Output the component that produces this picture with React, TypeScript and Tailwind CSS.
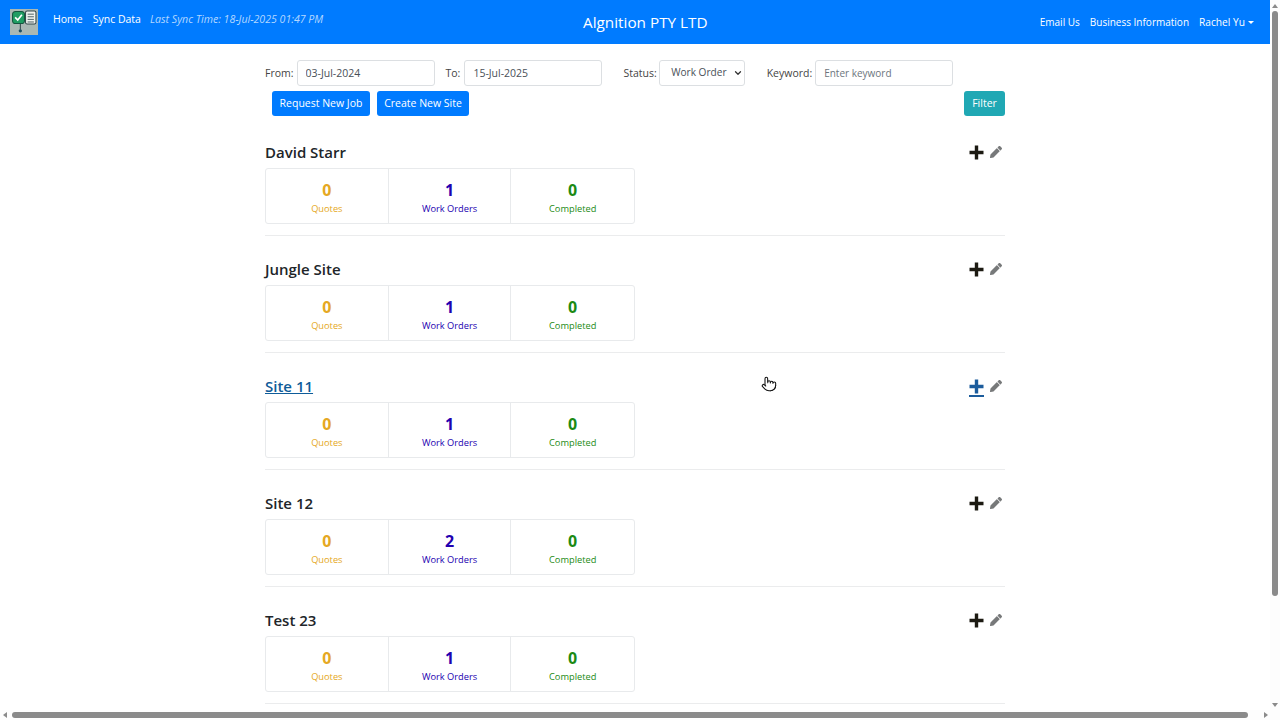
import { ChevronDown, Pointer } from "lucide-react"

const sites = [
  { name: "David Starr", orders: 1 },
  { name: "Jungle Site", orders: 1 },
  { name: "Site 11", orders: 1, hover: true },
  { name: "Site 12", orders: 2 },
  { name: "Test 23", orders: 1 },
]

function Logo() {
  return (
    <div className="flex h-[26px] w-[28px] items-start justify-center bg-[#a9b8b4] pt-[1px]">
      <svg width="25" height="25" viewBox="0 0 24 24">
        <path d="M8 13v6" stroke="#33474a" strokeWidth="1" />
        <circle cx="8" cy="20" r="1.6" fill="#1d4f63" />
        <rect x="0.5" y="1.5" width="11.5" height="11.5" rx="3" fill="#1f9d62" stroke="#14573f" />
        <path d="M3 7l2.5 2.5 4-5" fill="none" stroke="#fff" strokeWidth="1.6" />
        <rect x="13" y="1" width="10" height="12.5" rx="1.5" fill="#eef2ee" stroke="#33474a" />
        <path d="M15 4h6M15 6.5h6M15 9h6M15 11.5h6" stroke="#33474a" strokeWidth="0.8" />
      </svg>
    </div>
  )
}

function Pencil() {
  return (
    <svg width="12" height="12" viewBox="0 0 512 512" fill="#77797a">
      <path d="M497.9 142.1l-46.1 46.1c-4.7 4.7-12.3 4.7-17 0l-111-111c-4.7-4.7-4.7-12.3 0-17l46.1-46.1c18.7-18.7 49.1-18.7 67.9 0l60.1 60.1c18.8 18.7 18.8 49.1 0 67.9zM284.2 99.8L21.6 362.4.4 483.9c-2.9 16.4 11.4 30.6 27.8 27.8l121.5-21.3 262.6-262.6c4.7-4.7 4.7-12.3 0-17l-111-111c-4.8-4.7-12.4-4.7-17.1 0z" />
    </svg>
  )
}

function Plus({ color }: { color: string }) {
  return (
    <svg width="15" height="15" viewBox="0 0 15 15" fill={color}>
      <path d="M5.8 0.5h3.4v5.3h5.3v3.4H9.2v5.3H5.8V9.2H0.5V5.8h5.3z" />
    </svg>
  )
}

function Stat({ value, label, color, border }: { value: number; label: string; color: string; border?: boolean }) {
  return (
    <div className={`flex w-[123px] flex-col items-center pt-[10px] ${border ? "border-r border-[#e8eaec]" : ""}`}>
      <span className={`text-[16px] leading-[22px] font-bold ${color}`}>{value}</span>
      <span className={`mt-[1px] text-[9.25px] leading-[14px] ${color}`}>{label}</span>
    </div>
  )
}

function SiteRow({ name, orders, hover }: { name: string; orders: number; hover?: boolean }) {
  return (
    <section className="h-[117px] border-b border-[#ebeced]">
      <div className="flex h-[49.3px] items-end justify-between pr-[3px] pb-[6.5px]">
        <h2 className={`text-[15px] leading-[20px] font-semibold ${hover ? "text-[#0f5c99] underline" : "text-[#212529]"}`}>{name}</h2>
        <div className="mb-[2px] flex items-center gap-[6px]">
          <span className="relative">
            <Plus color={hover ? "#1c5c9c" : "#1c1a12"} />
            {hover && <span className="absolute -bottom-[3px] left-0 h-[2px] w-full bg-[#1c5c9c]" />}
          </span>
          <Pencil />
        </div>
      </div>
      <div className="flex h-[56px] w-[370px] rounded-[3px] border border-[#e8eaec]">
        <Stat value={0} label="Quotes" color="text-[#e5a823]" border />
        <Stat value={orders} label="Work Orders" color="text-[#2200b0]" border />
        <Stat value={0} label="Completed" color="text-[#1c8a14]" />
      </div>
    </section>
  )
}

export default function App() {
  const font = { fontFamily: '"Open Sans", "Noto Sans", sans-serif' }

  return (
    <div style={font} className="relative flex h-[720px] w-[1280px] flex-col overflow-hidden bg-white text-[10.5px] text-[#495057]">
      <div className="flex min-h-0 flex-1">
        <div className="w-[1270px]">
          <nav className="flex h-[44px] items-center bg-[#007bff] pl-[10px] pr-[16px] text-white">
            <div className="flex w-[400px] items-start gap-[15px]">
              <Logo />
              <div className="flex items-center gap-[10px] pt-[3px]">
                <a>Home</a>
                <a>Sync Data</a>
                <span className="-ml-[1px] text-[10.6px] italic text-[#b3d7ff]">Last Sync Time: 18-Jul-2025 01:47 PM</span>
              </div>
            </div>
            <div className="flex-1 pl-[173px] text-[15.3px]">Algnition PTY LTD</div>
            <div className="flex items-center gap-[10px] pt-[1px]">
              <a className="text-[10px]">Email Us</a>
              <a className="text-[10px]">Business Information</a>
              <a className="flex items-center gap-[3px] text-[10.2px]">
                Rachel Yu
                <span className="h-0 w-0 border-x-[3px] border-t-[3px] border-x-transparent border-t-white" />
              </a>
            </div>
          </nav>

          <main className="mx-auto w-[740px]">
            <div className="flex h-[47px] items-center pt-[14px] pb-[4px] text-[#444]">
              <label className="mr-[3px] pt-[2px]">From:</label>
              <input readOnly value="03-Jul-2024" className="h-[26px] w-[138px] rounded-[3px] border border-[#dcdfe2] px-[8px] text-[10.5px] text-[#495057]" />
              <label className="ml-[11px] mr-[4px] pt-[2px]">To:</label>
              <input readOnly value="15-Jul-2025" className="h-[26px] w-[138px] rounded-[3px] border border-[#dcdfe2] px-[8px] text-[10.5px] text-[#495057]" />
              <label className="ml-[21px] mr-[2px] pt-[2px]">Status:</label>
              <div className="flex h-[26px] w-[86px] items-center justify-between rounded-[3px] border border-[#dcdfe2] pl-[11.5px] pr-[1px] text-[10.1px] text-[#495057]">
                Work Order
                <ChevronDown size={10} strokeWidth={3} color="#333" />
              </div>
              <label className="ml-[22px] mr-[3px] pt-[2px]">Keyword:</label>
              <input placeholder="Enter keyword" className="h-[26px] w-[138px] rounded-[3px] border border-[#dcdfe2] px-[8px] text-[10px] placeholder:text-[#6c757d]" />
            </div>
            <div className="flex h-[25px] items-center justify-between pl-[7px] text-white">
              <div className="flex gap-[7px]">
                <button className="h-[25px] w-[98px] rounded-[3px] bg-[#007bff]">Request New Job</button>
                <button className="h-[25px] w-[92px] rounded-[3px] bg-[#007bff]">Create New Site</button>
              </div>
              <button className="h-[25px] w-[41px] rounded-[3px] bg-[#20a8b4]">Filter</button>
            </div>
            <div className="pt-[3.2px]">
              {sites.map((s) => (
                <SiteRow key={s.name} name={s.name} orders={s.orders} hover={s.hover} />
              ))}
            </div>
          </main>
        </div>

        <div className="flex w-[10px] flex-col items-center bg-[#fdfdfd]">
          <span className="mt-[4px] h-0 w-0 border-x-[3px] border-b-[4px] border-x-transparent border-b-[#8a8a8a]" />
          <span className="mt-[3px] h-[585px] w-[6px] rounded-[3px] bg-[#8a8a8a]" />
          <span className="mt-auto mb-[3px] h-0 w-0 border-x-[3px] border-t-[4px] border-x-transparent border-t-[#8a8a8a]" />
        </div>
      </div>

      <div className="flex h-[10px] items-center bg-[#fdfdfd] pl-[3px] pr-[12px]">
        <span className="h-0 w-0 border-y-[3px] border-r-[4px] border-y-transparent border-r-[#8a8a8a]" />
        <span className="ml-[5px] h-[6px] w-[1236px] rounded-[3px] bg-[#8a8a8a]" />
        <span className="ml-auto h-0 w-0 border-y-[3px] border-l-[4px] border-y-transparent border-l-[#8a8a8a]" />
      </div>

      <Pointer size={16} strokeWidth={1.6} color="#111" fill="#fff" className="absolute left-[761px] top-[376px]" />
    </div>
  )
}
